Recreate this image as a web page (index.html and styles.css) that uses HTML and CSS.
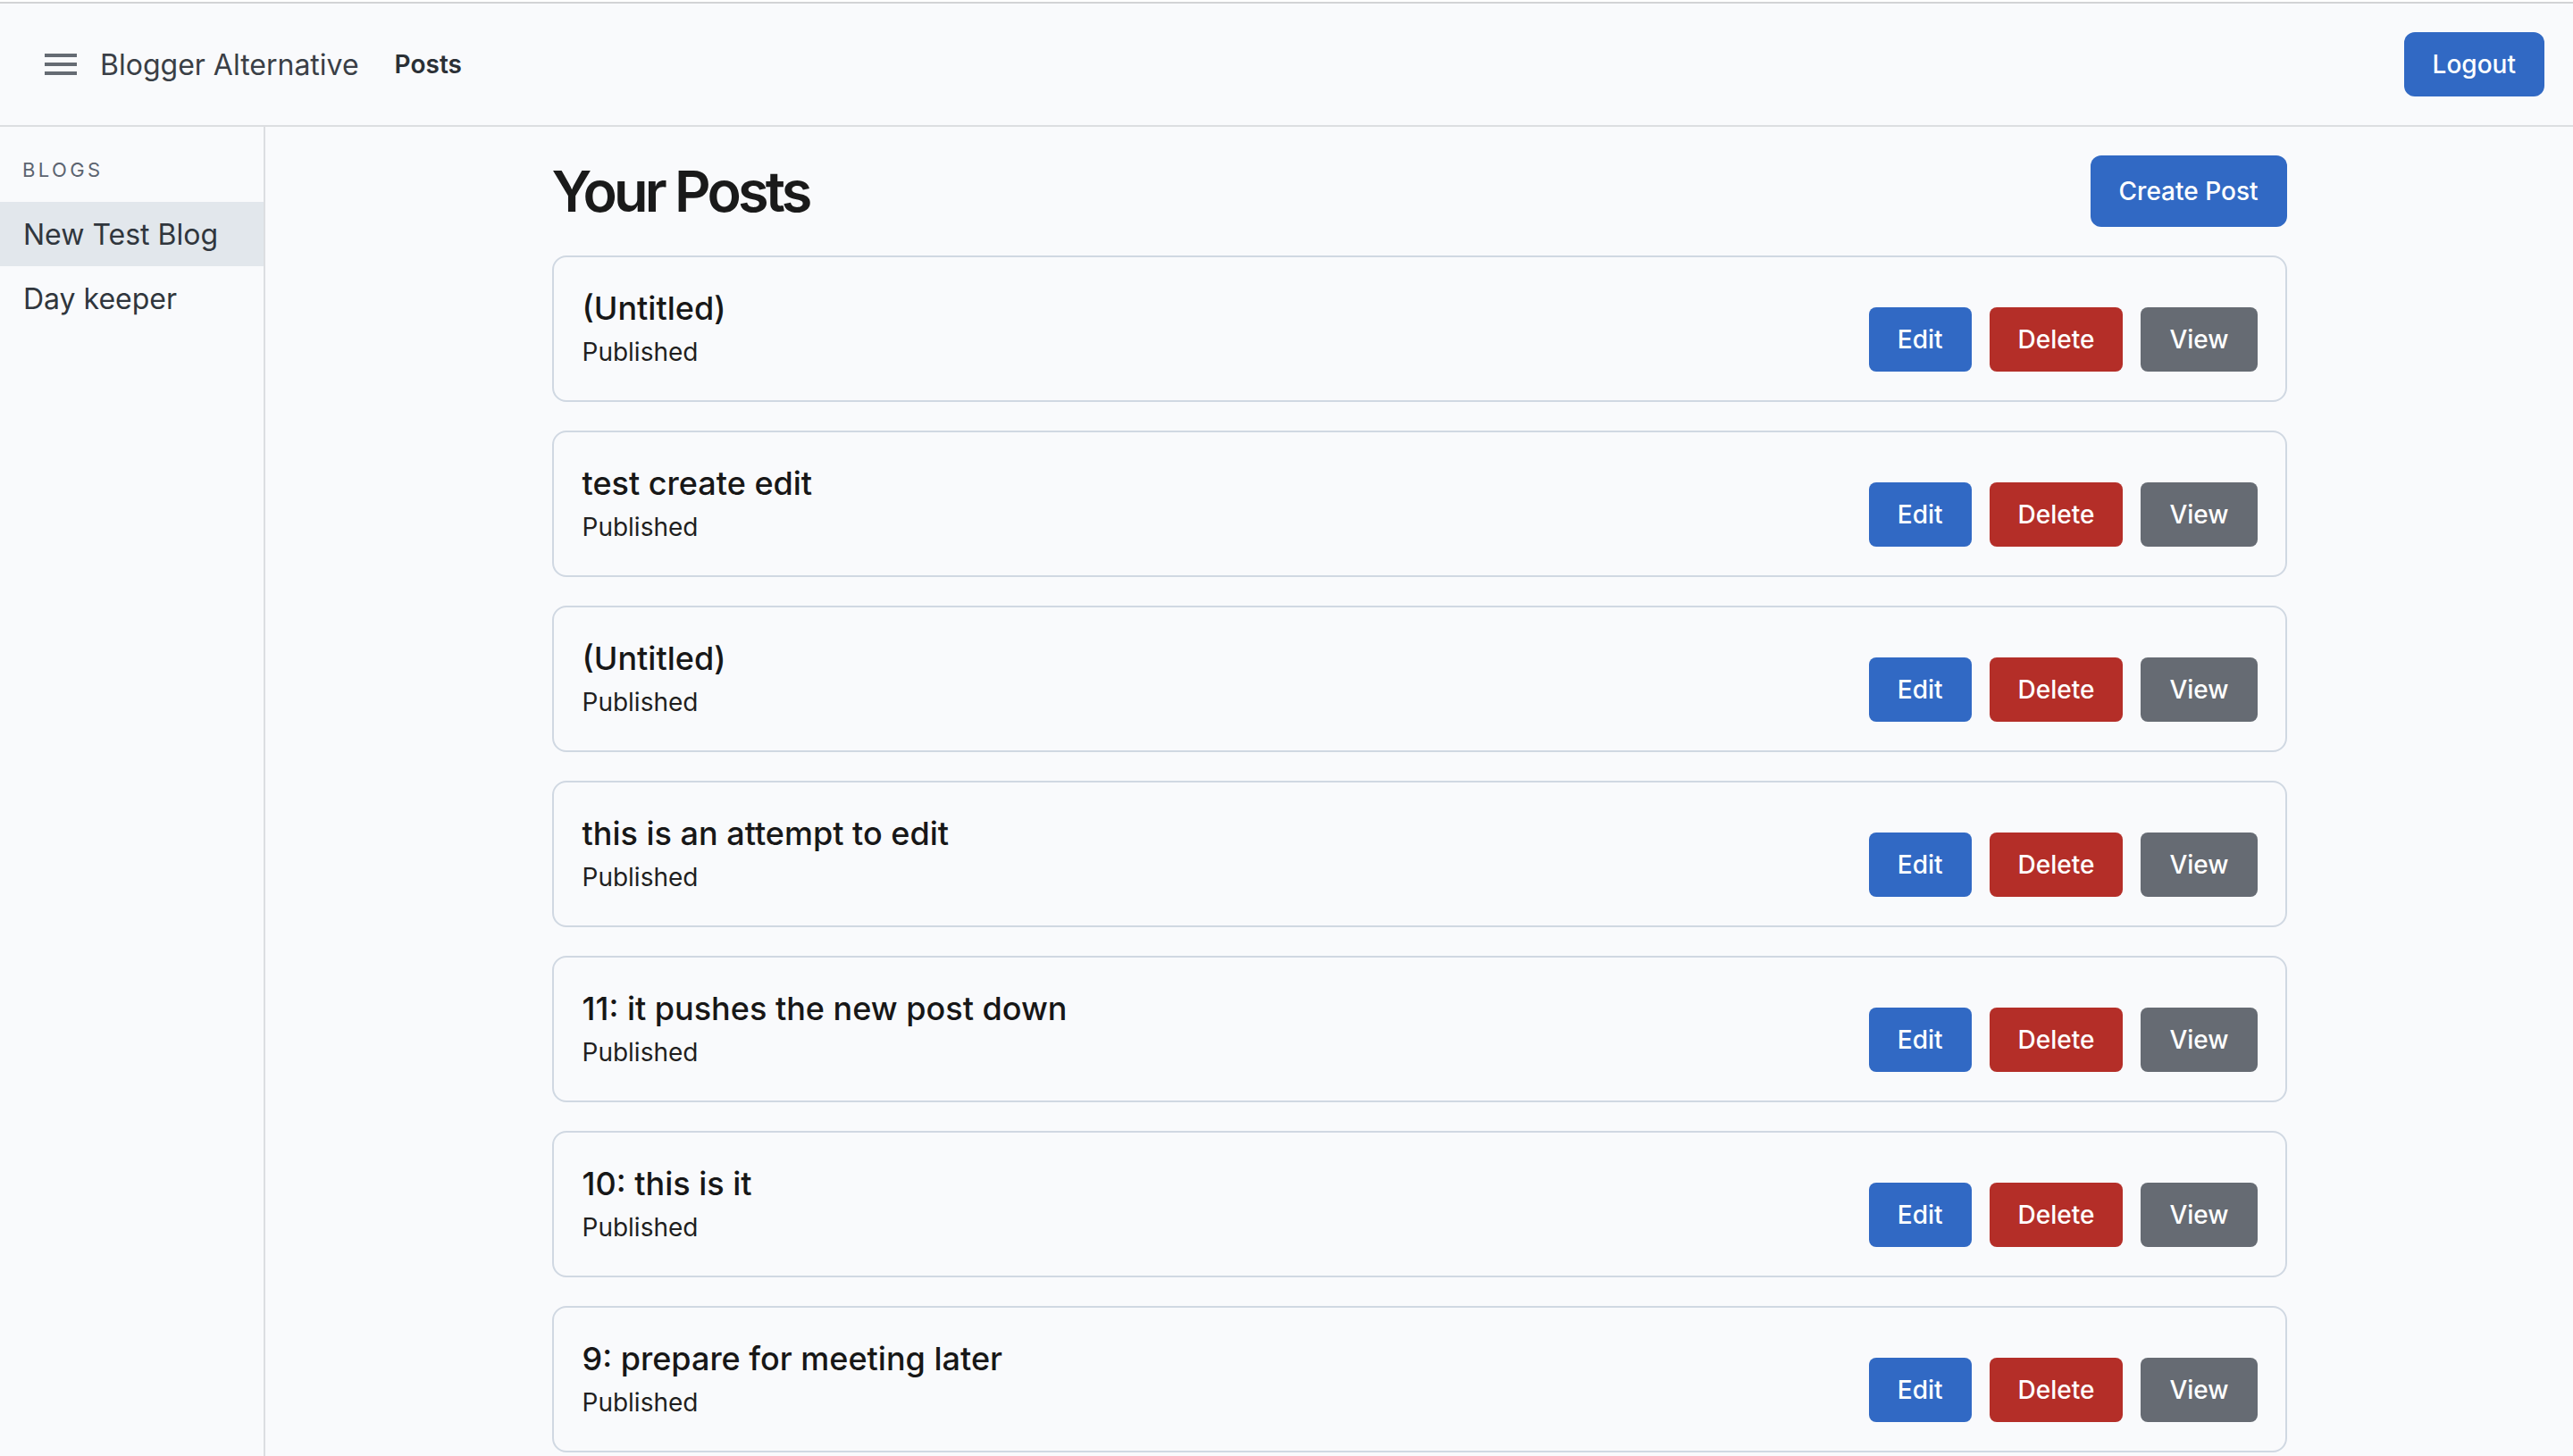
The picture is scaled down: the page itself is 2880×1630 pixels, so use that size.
FILE: index.html
```html
<!DOCTYPE html>
<html lang="en">
<head>
<meta charset="utf-8">
<title>Blogger Alternative</title>
<link rel="stylesheet" href="styles.css">
</head>
<body>
<div class="app">
  <header class="topbar">
    <div class="topbar-left">
      <button class="menu-btn" aria-label="Menu">
        <svg width="36" height="24" viewBox="0 0 36 24"><rect x="0" y="0" width="36" height="4" fill="#656b73"/><rect x="0" y="10" width="36" height="4" fill="#656b73"/><rect x="0" y="20" width="36" height="4" fill="#656b73"/></svg>
      </button>
      <span class="brand">Blogger Alternative</span>
      <a class="nav-link">Posts</a>
    </div>
    <button class="btn btn-blue btn-logout">Logout</button>
  </header>
  <div class="body">
    <aside class="sidebar">
      <div class="sidebar-label">BLOGS</div>
      <div class="sidebar-item active">New Test Blog</div>
      <div class="sidebar-item">Day keeper</div>
    </aside>
    <main class="main">
      <div class="container">
        <div class="page-head">
          <h1 class="page-title">Your Posts</h1>
          <button class="btn btn-blue btn-create">Create Post</button>
        </div>
        <div class="post-list">
          <div class="card"><div class="card-text"><div class="card-title">(Untitled)</div><div class="card-status">Published</div></div><div class="actions"><button class="btn btn-sm btn-blue">Edit</button><button class="btn btn-sm btn-red">Delete</button><button class="btn btn-sm btn-gray">View</button></div></div>
          <div class="card"><div class="card-text"><div class="card-title">test create edit</div><div class="card-status">Published</div></div><div class="actions"><button class="btn btn-sm btn-blue">Edit</button><button class="btn btn-sm btn-red">Delete</button><button class="btn btn-sm btn-gray">View</button></div></div>
          <div class="card"><div class="card-text"><div class="card-title">(Untitled)</div><div class="card-status">Published</div></div><div class="actions"><button class="btn btn-sm btn-blue">Edit</button><button class="btn btn-sm btn-red">Delete</button><button class="btn btn-sm btn-gray">View</button></div></div>
          <div class="card"><div class="card-text"><div class="card-title">this is an attempt to edit</div><div class="card-status">Published</div></div><div class="actions"><button class="btn btn-sm btn-blue">Edit</button><button class="btn btn-sm btn-red">Delete</button><button class="btn btn-sm btn-gray">View</button></div></div>
          <div class="card"><div class="card-text"><div class="card-title">11: it pushes the new post down</div><div class="card-status">Published</div></div><div class="actions"><button class="btn btn-sm btn-blue">Edit</button><button class="btn btn-sm btn-red">Delete</button><button class="btn btn-sm btn-gray">View</button></div></div>
          <div class="card"><div class="card-text"><div class="card-title">10: this is it</div><div class="card-status">Published</div></div><div class="actions"><button class="btn btn-sm btn-blue">Edit</button><button class="btn btn-sm btn-red">Delete</button><button class="btn btn-sm btn-gray">View</button></div></div>
          <div class="card"><div class="card-text"><div class="card-title">9: prepare for meeting later</div><div class="card-status">Published</div></div><div class="actions"><button class="btn btn-sm btn-blue">Edit</button><button class="btn btn-sm btn-red">Delete</button><button class="btn btn-sm btn-gray">View</button></div></div>
        </div>
      </div>
    </main>
  </div>
</div>
</body>
</html>
```
FILE: styles.css
```css
html {
  background: #ffffff;
}
body {
  margin: 0;
  padding-top: 2px;
  font-family: Inter, "Noto Sans", "Liberation Sans", sans-serif;
  color: #1a1a1a;
  height: 1628px;
  overflow: hidden;
}
.app {
  background: #f9fafc;
  height: 100%;
  display: flex;
  flex-direction: column;
}
.topbar {
  border-top: 2px solid #d2d3d5;
  border-bottom: 2px solid #dcdee1;
  height: 136px;
  display: flex;
  align-items: center;
  justify-content: space-between;
  padding: 0 32px 0 50px;
  flex: none;
}
.topbar-left {
  display: flex;
  align-items: center;
}
.menu-btn {
  border: 0;
  background: none;
  padding: 0;
  width: 36px;
  height: 24px;
  display: flex;
  margin-right: 26px;
}
.brand {
  font-size: 32px;
  color: #3a3f46;
  font-weight: 400;
}
.nav-link {
  margin-left: 40px;
  font-size: 28px;
  font-weight: 600;
  color: #2b3036;
}
.btn {
  font-family: inherit;
  border: 0;
  color: #ffffff;
  font-weight: 500;
  font-size: 28px;
  padding: 0 32px;
  cursor: pointer;
}
.btn-blue { background: #3169c4; }
.btn-red { background: #b42e28; }
.btn-gray { background: #666b73; }
.btn-logout {
  height: 72px;
  border-radius: 12px;
}
.btn-create {
  height: 80px;
  border-radius: 12px;
}
.btn-sm {
  height: 72px;
  border-radius: 8px;
}
.body {
  flex: 1;
  display: flex;
  min-height: 0;
}
.sidebar {
  width: 295px;
  border-right: 2px solid #dcdee1;
  padding-top: 32px;
  flex: none;
}
.sidebar-label {
  font-size: 22px;
  line-height: 33px;
  letter-spacing: 3.4px;
  color: #5c6470;
  padding-left: 25px;
  margin-bottom: 19px;
}
.sidebar-item {
  height: 72px;
  display: flex;
  align-items: center;
  padding-left: 26px;
  font-size: 32px;
  color: #30363d;
}
.sidebar-item.active {
  background: #e2e7ec;
}
.main {
  flex: 1;
  padding-top: 32px;
  overflow: hidden;
}
.container {
  width: 1942px;
  margin: 0 auto;
}
.page-head {
  display: flex;
  align-items: center;
  justify-content: space-between;
  height: 80px;
  margin-bottom: 32px;
}
.page-title {
  margin: 0;
  font-size: 63px;
  font-weight: 600;
  letter-spacing: -3.8px;
  color: #1a1a1a;
}
.post-list {
  display: flex;
  flex-direction: column;
  gap: 32px;
}
.card {
  border: 2px solid #d0d8e2;
  border-radius: 16px;
  padding: 32px 31px 32px 32px;
  display: flex;
  align-items: flex-end;
  justify-content: space-between;
}
.card-title {
  font-size: 36px;
  font-weight: 500;
  line-height: 50px;
  color: #171717;
}
.card-status {
  font-size: 28px;
  line-height: 44px;
  margin-top: 2px;
  color: #1f1f1f;
}
.actions {
  display: flex;
  gap: 20px;
}
```
